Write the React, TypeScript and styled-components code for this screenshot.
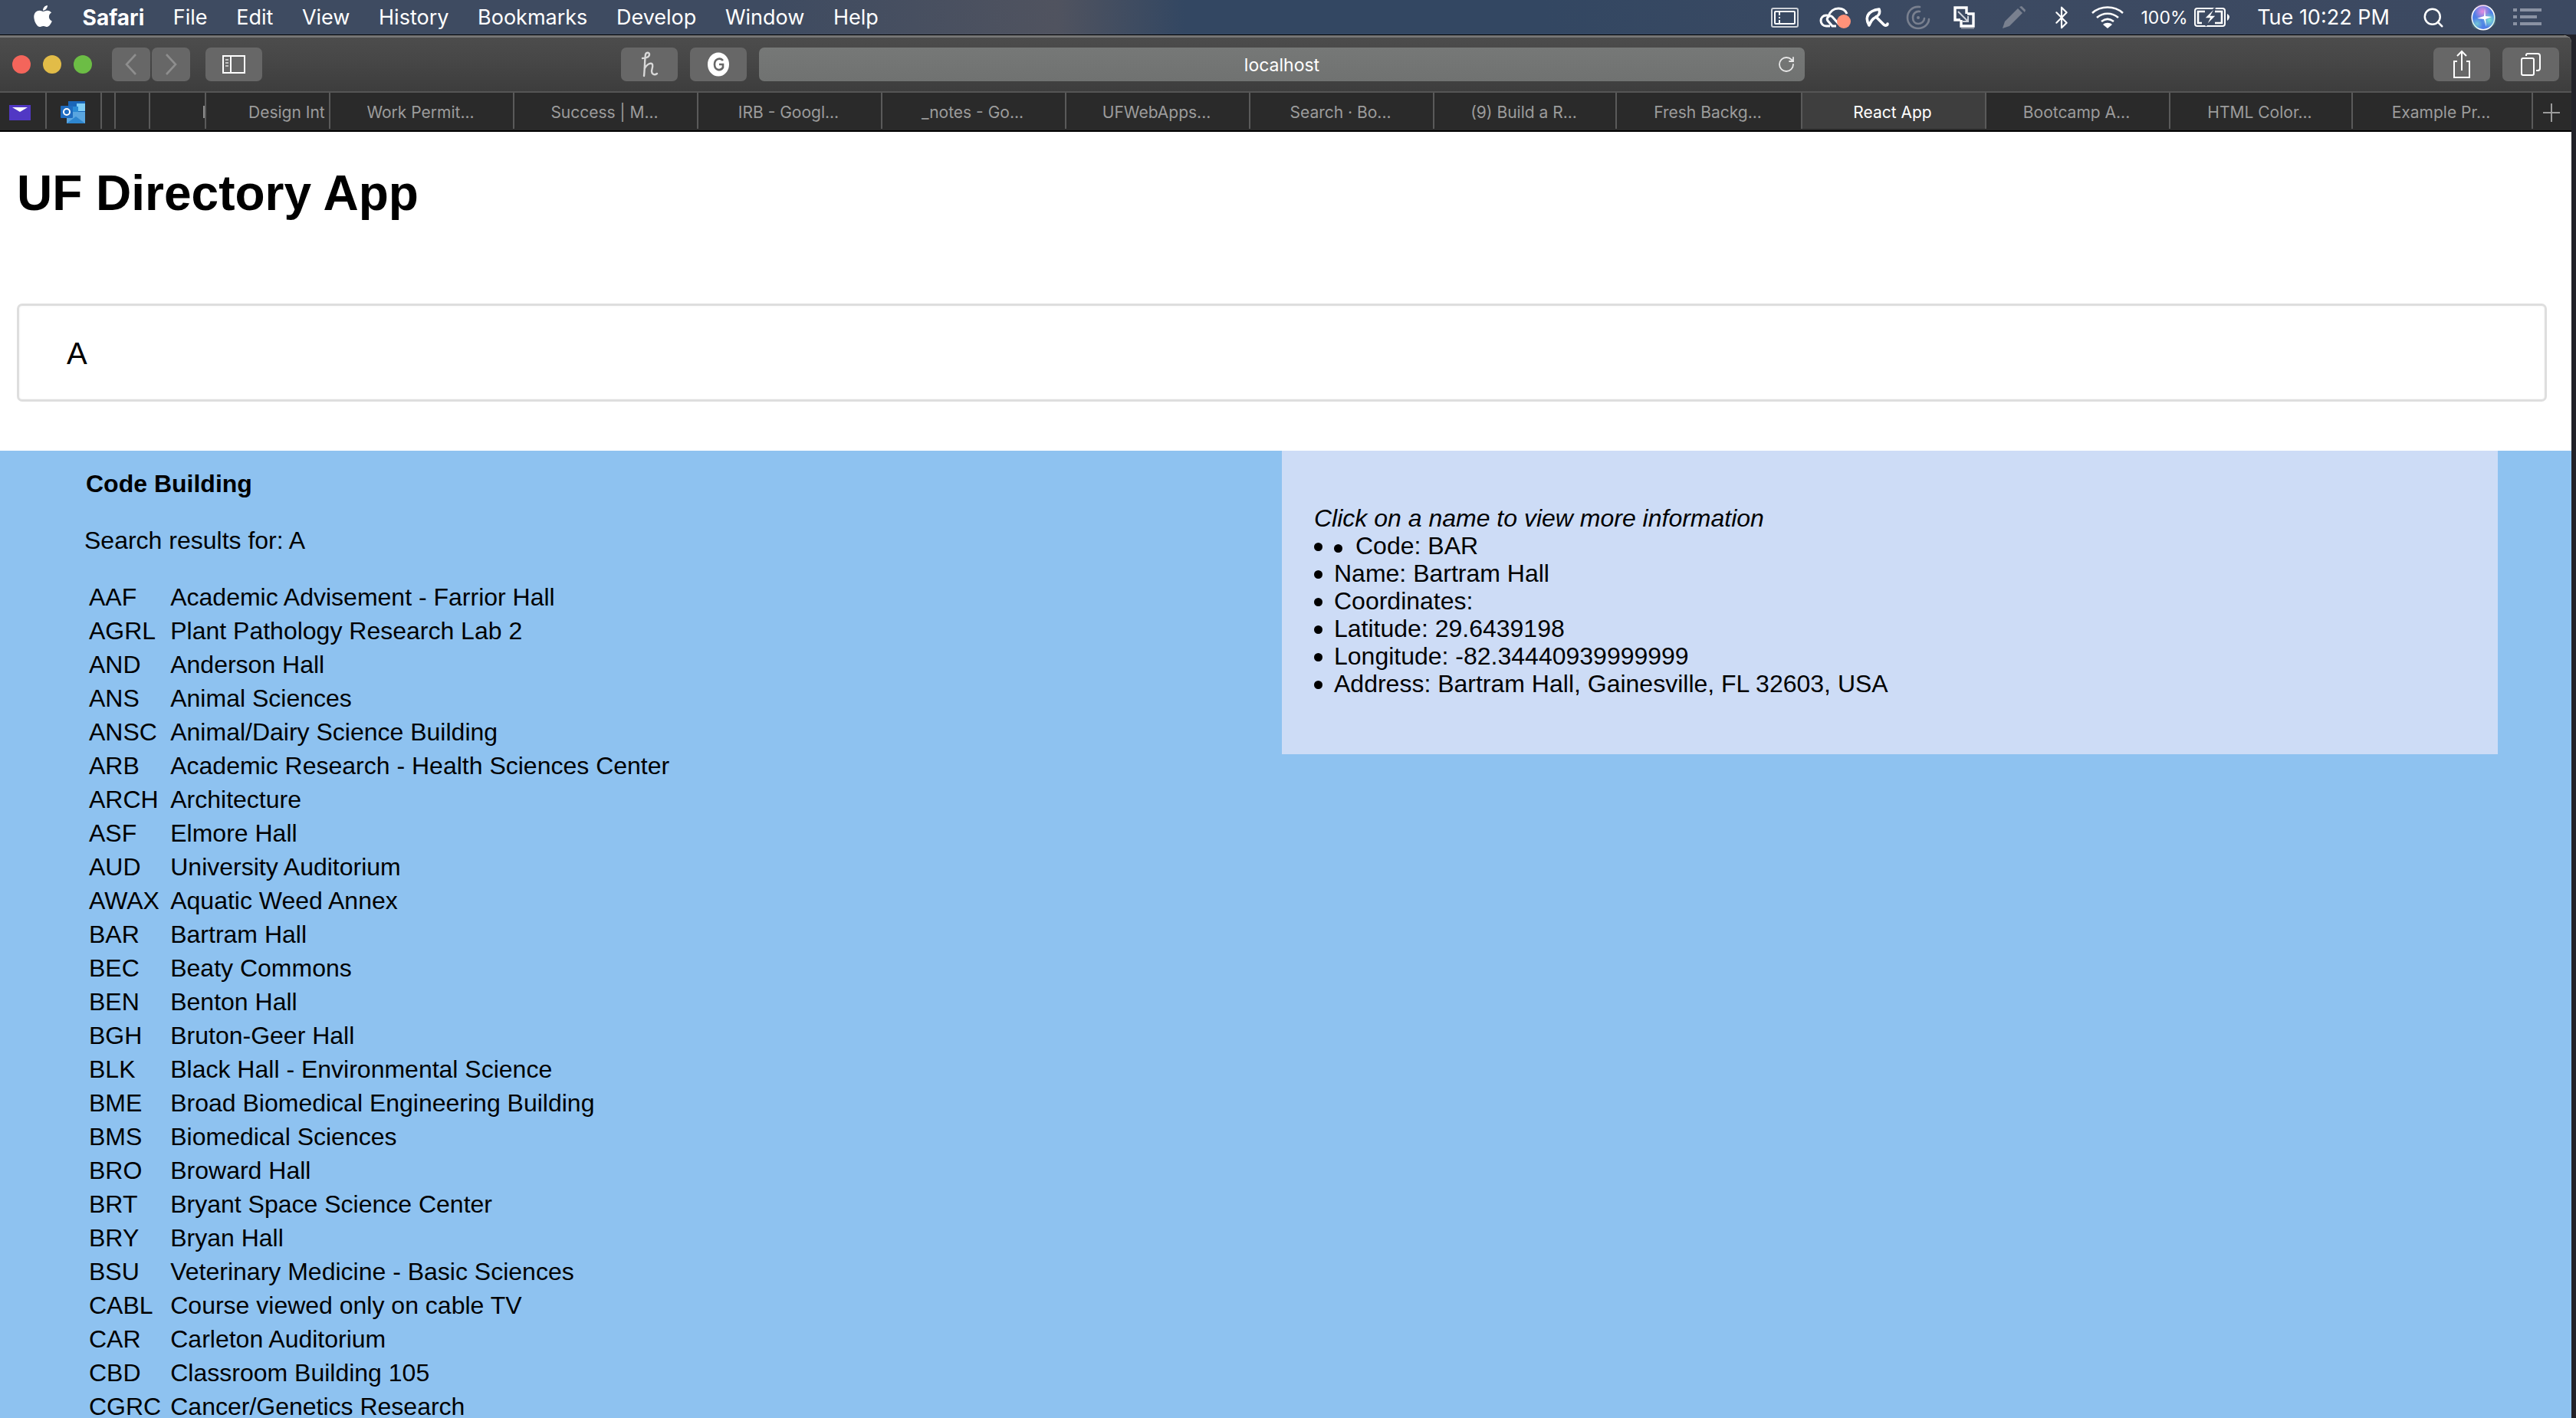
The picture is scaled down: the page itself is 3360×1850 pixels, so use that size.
import React from "react";
import styled, { createGlobalStyle } from "styled-components";
import { FaApple } from "react-icons/fa";
import { Bluetooth, Search, RotateCw } from "lucide-react";

const Global = createGlobalStyle`
  html, body { margin: 0; padding: 0; background: #222229; }
  * { box-sizing: border-box; }
`;

const Screen = styled.div`
  width: 3360px;
  height: 1850px;
  overflow: hidden;
  display: flex;
  flex-direction: column;
  background: #222229;
  font-family: "Liberation Sans", Arial, sans-serif;
`;

const MenuBar = styled.div`
  flex: none;
  height: 45px;
  display: flex;
  align-items: center;
  justify-content: space-between;
  padding: 0 45px 0 42px;
  color: #fff;
  font-family: Inter, "Liberation Sans", sans-serif;
  font-size: 27px;
  background: linear-gradient(90deg, #3e4b61 0%, #3e4b61 30%, #50535f 41%, #334762 46%, #334762 60%, #3c4a62 75%, #3c4961 100%);
`;
const MenuLeft = styled.div`
  display: flex;
  align-items: center;
  gap: 37.6px;
`;
const AppleMark = styled.span`
  display: flex;
  width: 28px;
  svg { display: block; margin-top: -4px; }
`;
const MenuItem = styled.span<{ $bold?: boolean }>`
  font-weight: ${(p) => (p.$bold ? 700 : 400)};
  font-size: ${(p) => (p.$bold ? "28px" : "inherit")};
  white-space: nowrap;
`;
const StatusRow = styled.div`
  display: flex;
  align-items: center;
`;
const StatusSlot = styled.span<{ $left: number; $w: number; $small?: boolean }>`
  display: flex;
  justify-content: center;
  align-items: center;
  flex: none;
  margin-left: ${(p) => p.$left}px;
  width: ${(p) => p.$w}px;
  height: 45px;
  white-space: nowrap;
  font-size: ${(p) => (p.$small ? "23px" : "inherit")};
  svg { display: block; flex: none; }
`;

const Browser = styled.div`
  flex: 1;
  min-height: 0;
  width: 3354px;
  display: flex;
  flex-direction: column;
  border-top: 1px solid #000;
  border-top-right-radius: 10px;
  overflow: hidden;
  background: #fff;
`;
const Toolbar = styled.div`
  flex: none;
  height: 75px;
  display: flex;
  align-items: center;
  padding: 0 16px;
  background: linear-gradient(180deg, #4c4c4c 0%, #474747 40%, #3d3d3d 100%);
  border-top: 3px solid #767676;
  border-bottom: 2px solid #555;
`;
const Light = styled.span<{ $c: string }>`
  width: 24px;
  height: 24px;
  border-radius: 50%;
  flex: none;
  margin-right: 16px;
  background: ${(p) => p.$c};
`;
const ToolButton = styled.div<{ $w: number; $left?: number }>`
  flex: none;
  width: ${(p) => p.$w}px;
  height: 44px;
  margin-left: ${(p) => p.$left ?? 0}px;
  border-radius: 7px;
  background: #676767;
  display: flex;
  align-items: center;
  justify-content: center;
  svg { display: block; }
`;
const UrlBar = styled.div`
  flex: none;
  position: relative;
  width: 1364px;
  height: 44px;
  margin-left: 16px;
  padding-top: 2px;
  border-radius: 7px;
  background: linear-gradient(180deg, #767877 0%, #707271 100%);
  color: #fff;
  font-family: Inter, "Liberation Sans", sans-serif;
  font-size: 23px;
  display: flex;
  align-items: center;
  justify-content: center;
`;
const Reload = styled.span`
  position: absolute;
  right: 12px;
  top: 10px;
  display: flex;
  color: #e8e8e8;
`;
const Spacer = styled.div`
  flex: 1;
`;

const TabStrip = styled.div`
  flex: none;
  height: 51px;
  display: flex;
  background: #2a2a2a;
  border-bottom: 2px solid #000;
  font-family: Inter, "Liberation Sans", sans-serif;
  font-size: 21px;
  color: #9c9c9c;
`;
const Tab = styled.div<{ $w: number; $active?: boolean; $start?: number; $noLine?: boolean }>`
  flex: none;
  position: relative;
  width: ${(p) => p.$w}px;
  height: 47px;
  margin-bottom: 2px;
  display: flex;
  align-items: center;
  justify-content: ${(p) => (p.$start ? "flex-start" : "center")};
  padding: 4px ${(p) => (p.$start ? 0 : 3)}px 0 ${(p) => p.$start ?? 0}px;
  overflow: hidden;
  white-space: nowrap;
  border-right: ${(p) => (p.$noLine ? "0" : "2px solid #5a5a5a")};
  background: ${(p) => (p.$active ? "#3e3e3e" : "transparent")};
  color: ${(p) => (p.$active ? "#fff" : "inherit")};
  svg { display: block; }
`;
const Tick = styled.span`
  position: absolute;
  left: 69px;
  top: 17px;
  width: 3px;
  height: 16px;
  background: #8c8c8c;
`;

const Page = styled.div`
  flex: 1;
  min-height: 0;
  display: flex;
  flex-direction: column;
  background: #fff;
`;
const Header = styled.div`
  flex: none;
  height: 416px;
  padding: 0 32px 0 22px;
  display: flex;
  flex-direction: column;
`;
const Title = styled.h1`
  margin: 43px 0 0;
  font-size: 64px;
  line-height: 75px;
  font-weight: 700;
  color: #000;
`;
const SearchBox = styled.div`
  margin-top: 106px;
  height: 128px;
  border: 3px solid #dedede;
  border-radius: 7px;
  box-shadow: inset 0 0 3px rgba(0, 0, 0, 0.06);
  padding: 2px 0 0 62px;
  display: flex;
  align-items: center;
  font-size: 40px;
  color: #000;
`;
const Content = styled.div`
  flex: 1;
  min-height: 0;
  display: flex;
  align-items: flex-start;
  background: #8ec2f0;
  color: #000;
  font-size: 32px;
  padding-right: 96px;
`;
const ListColumn = styled.div`
  flex: none;
  width: 1672px;
  padding: 23px 0 0 110px;
`;
const ColumnHead = styled.div`
  font-weight: 700;
  line-height: 40px;
  padding-left: 2px;
`;
const ResultNote = styled.div`
  line-height: 40px;
  margin-top: 34px;
  margin-bottom: 32px;
`;
const BuildingTable = styled.table`
  border-collapse: collapse;
`;
const Row = styled.tr`
  height: 44px;
`;
const CodeCell = styled.td`
  padding: 0 12px 0 6px;
  line-height: 40px;
  white-space: nowrap;
`;
const NameCell = styled.td`
  padding: 0;
  line-height: 40px;
  white-space: nowrap;
`;
const InfoPanel = styled.div`
  flex: 1;
  height: 396px;
  background: #cddcf6;
  padding: 70px 42px 0;
  line-height: 36px;
`;
const Hint = styled.div`
  font-style: italic;
`;
const InfoList = styled.ul`
  margin: 0;
  padding: 0;
  list-style: none;
`;
const InfoItem = styled.li`
  position: relative;
  padding-left: 26px;
  &::before {
    content: "";
    position: absolute;
    left: 0;
    top: 14px;
    width: 11px;
    height: 11px;
    border-radius: 50%;
    background: #000;
  }
`;
const NestedDot = styled.span`
  display: inline-block;
  width: 11px;
  height: 11px;
  border-radius: 50%;
  background: #000;
  margin: 0 17px 2px 0;
`;

const buildings: [string, string][] = [
  ["AAF", "Academic Advisement - Farrior Hall"],
  ["AGRL", "Plant Pathology Research Lab 2"],
  ["AND", "Anderson Hall"],
  ["ANS", "Animal Sciences"],
  ["ANSC", "Animal/Dairy Science Building"],
  ["ARB", "Academic Research - Health Sciences Center"],
  ["ARCH", "Architecture"],
  ["ASF", "Elmore Hall"],
  ["AUD", "University Auditorium"],
  ["AWAX", "Aquatic Weed Annex"],
  ["BAR", "Bartram Hall"],
  ["BEC", "Beaty Commons"],
  ["BEN", "Benton Hall"],
  ["BGH", "Bruton-Geer Hall"],
  ["BLK", "Black Hall - Environmental Science"],
  ["BME", "Broad Biomedical Engineering Building"],
  ["BMS", "Biomedical Sciences"],
  ["BRO", "Broward Hall"],
  ["BRT", "Bryant Space Science Center"],
  ["BRY", "Bryan Hall"],
  ["BSU", "Veterinary Medicine - Basic Sciences"],
  ["CABL", "Course viewed only on cable TV"],
  ["CAR", "Carleton Auditorium"],
  ["CBD", "Classroom Building 105"],
  ["CGRC", "Cancer/Genetics Research"],
];

const tabs: { w: number; label: string; active?: boolean }[] = [
  { w: 240, label: "Work Permit..." },
  { w: 240, label: "Success | M..." },
  { w: 240, label: "IRB - Googl..." },
  { w: 240, label: "_notes - Go..." },
  { w: 240, label: "UFWebApps..." },
  { w: 240, label: "Search · Bo..." },
  { w: 238, label: "(9) Build a R..." },
  { w: 242, label: "Fresh Backg..." },
  { w: 240, label: "React App", active: true },
  { w: 240, label: "Bootcamp A..." },
  { w: 238, label: "HTML Color..." },
  { w: 235, label: "Example Pr..." },
];

const Sidecar = () => (
  <svg width="36" height="26" viewBox="0 0 36 26" fill="none" stroke="#fff" strokeWidth="2">
    <rect x="1" y="1" width="34" height="24" rx="2" opacity=".75" />
    <rect x="5" y="5" width="26" height="16" rx="1" />
    <path d="M11 5v5M11 16v5M11 12v2" />
  </svg>
);
const CloudCC = () => (
  <svg width="41" height="29" viewBox="0 0 41 29" fill="none">
    <path d="M14 26H9c-4 0-7-3-7-7s3-7 7-7c1 0 2 0 3 1 2-6 7-10 13-10 5 0 9 2 11 7" stroke="#fff" strokeWidth="3" />
    <path d="M22 26h-5l-6-7c-3-4 3-8 6-5l9 10" stroke="#fff" strokeWidth="3" />
    <circle cx="32" cy="20" r="9" fill="#ff9279" />
  </svg>
);
const Umbrella = () => (
  <svg width="32" height="28" viewBox="0 0 32 28" fill="none" stroke="#fff" strokeWidth="3.6" strokeLinecap="round" strokeLinejoin="round">
    <path d="M6 24C0 14 4 5 19 3c2 6-1 9-7 12-3 2-4 5-6 9z" />
    <path d="M15 13l10 10c2 2 5 1 5-1" />
  </svg>
);
const Spiral = () => (
  <svg width="32" height="32" viewBox="0 0 32 32" fill="none" stroke="#79808f" strokeWidth="2.6" strokeLinecap="round">
    <path d="M18 2C8 1 2 8 2 16c0 8 6 14 14 14 8 0 14-6 14-12" />
    <path d="M18 8c-5-1-9 3-9 8s3 8 7 8 8-3 8-7" />
    <circle cx="16" cy="16" r="2" fill="#79808f" stroke="none" />
  </svg>
);
const CopySync = () => (
  <svg width="28" height="30" viewBox="0 0 28 30" fill="none">
    <path d="M10 27h17" stroke="#79808f" strokeWidth="3" transform="translate(0 2)" />
    <path d="M9 18H2V2h15v8" stroke="#fff" strokeWidth="3.4" />
    <path d="M18 10h8v16H10v-8" stroke="#fff" strokeWidth="3.4" />
    <path d="M6 7l13 13M19 13v7h-7" stroke="#cfd3da" strokeWidth="2" />
  </svg>
);
const Pen = () => (
  <svg width="30" height="29" viewBox="0 0 30 29" fill="#79808f">
    <path d="M0 29l3-9L20 3l6 6L9 26z" />
    <path d="M22 1l3-1 5 5-1 3z" />
  </svg>
);
const Wifi = () => (
  <svg width="42" height="29" viewBox="0 0 42 29" fill="none" stroke="#fff" strokeWidth="2.6">
    <path d="M1 9c11-10 29-10 40 0" />
    <path d="M7 15c8-7 20-7 28 0" />
    <path d="M13 20c5-4 11-4 16 0" />
    <path d="M21 29l-6-5c3-3 9-3 12 0z" fill="#fff" stroke="none" />
  </svg>
);
const Battery = () => (
  <svg width="46" height="25" viewBox="0 0 46 25" fill="none">
    <rect x="1" y="1" width="39" height="23" rx="3" stroke="#fff" strokeWidth="2" />
    <path d="M43 8c2 1 3 3 3 4s-1 4-3 5z" fill="#fff" />
    <path d="M14 5H5v15h5M27 5h9v15h-9" stroke="#fff" strokeWidth="2.6" />
    <path d="M26 1L13 14h7l-5 10 14-14h-7l5-9z" fill="#fff" stroke="#3c4961" strokeWidth="1.5" />
  </svg>
);
const Siri = () => (
  <svg width="32" height="34" viewBox="0 0 32 34">
    <defs>
      <radialGradient id="siriA" cx="50%" cy="50%" r="50%">
        <stop offset="0" stopColor="#e58be0" />
        <stop offset="1" stopColor="#e58be0" stopOpacity="0" />
      </radialGradient>
      <radialGradient id="siriB" cx="50%" cy="50%" r="50%">
        <stop offset="0" stopColor="#7fe4d0" />
        <stop offset="1" stopColor="#7fe4d0" stopOpacity="0" />
      </radialGradient>
    </defs>
    <ellipse cx="16" cy="17" rx="15.5" ry="16.5" fill="#fff" />
    <ellipse cx="16" cy="17" rx="14" ry="15" fill="#4f7fe6" />
    <circle cx="15" cy="9" r="11" fill="url(#siriA)" />
    <circle cx="24" cy="20" r="10" fill="url(#siriB)" />
    <circle cx="8" cy="25" r="8" fill="url(#siriB)" opacity=".7" />
    <path d="M18 5l-1 10-9 3 9 1 3 10-1-10 8-3-8-1z" fill="#fff" />
  </svg>
);
const NotificationList = () => (
  <svg width="37" height="23" viewBox="0 0 37 23" fill="#8a92a3">
    <rect x="0" y="0" width="5" height="4" />
    <rect x="9" y="0" width="28" height="4" />
    <rect x="0" y="9" width="5" height="4" />
    <rect x="9" y="9" width="22" height="4" />
    <rect x="0" y="18" width="5" height="4" />
    <rect x="9" y="18" width="28" height="4" />
  </svg>
);
const SidebarGlyph = () => (
  <svg width="30" height="24" viewBox="0 0 30 24" fill="none" stroke="#fff" strokeWidth="2">
    <rect x="1" y="1" width="28" height="22" />
    <path d="M11 1v22" />
    <path d="M4 6h4M4 10h4M4 14h4" strokeWidth="1.6" opacity=".8" />
  </svg>
);
const Chevron = ({ dir }: { dir: "l" | "r" }) => (
  <svg width="16" height="28" viewBox="0 0 16 28" fill="none" stroke="#8e8e8e" strokeWidth="2.6">
    <path d={dir === "l" ? "M14 1L2 14l12 13" : "M2 1l12 13L2 27"} />
  </svg>
);
const HandH = () => (
  <svg width="26" height="34" viewBox="0 0 26 34" fill="none" stroke="#d8d8d8" strokeWidth="2.4" strokeLinecap="round">
    <path d="M4 9c3 0 9-1 9-5 0-3-4-3-5 0-1 5-1 20-2 28" />
    <path d="M7 22c2-4 6-7 9-6 3 1 0 7 0 10s3 6 7 3" />
  </svg>
);
const GrammarlyG = () => (
  <svg width="28" height="32" viewBox="0 0 28 32">
    <ellipse cx="14" cy="16" rx="14" ry="15.5" fill="#fff" />
    <path d="M20 11c-3-4-11-3-11 5s8 9 11 4v-4h-5" fill="none" stroke="#676767" strokeWidth="2.6" />
  </svg>
);
const Share = () => (
  <svg width="24" height="38" viewBox="0 0 24 38" fill="none" stroke="#fff" strokeWidth="2">
    <path d="M6 15H2v21h20V15h-4" />
    <path d="M12 27V2M6 8l6-6 6 6" />
  </svg>
);
const TabsGlyph = () => (
  <svg width="26" height="30" viewBox="0 0 26 30" fill="none" stroke="#fff" strokeWidth="2">
    <rect x="1" y="7" width="16" height="22" rx="2" />
    <path d="M7 4V3c0-1 1-2 2-2h13c2 0 3 1 3 3v16c0 2-1 3-3 3h-2" />
  </svg>
);
const MailFav = () => (
  <svg width="28" height="20" viewBox="0 0 28 20">
    <rect width="28" height="20" fill="#5138c4" />
    <path d="M4 3h20l-10 6z" fill="#fff" />
  </svg>
);
const OutlookFav = () => (
  <svg width="32" height="29" viewBox="0 0 32 29">
    <rect x="10" y="0" width="22" height="14" fill="#1a66b8" />
    <rect x="21" y="3" width="11" height="10" fill="#7fcdf5" />
    <rect x="15" y="7" width="8" height="8" fill="#2a8ad4" />
    <path d="M8 14l24 0v15H8z" fill="#5aa6e0" />
    <path d="M8 29l12-9 12 9z" fill="#2e86cf" />
    <rect x="0" y="6" width="16" height="16" rx="1" fill="#1f6cc0" />
    <circle cx="8" cy="14" r="4" fill="none" stroke="#fff" strokeWidth="2" />
  </svg>
);
const PlusGlyph = () => (
  <svg width="22" height="26" viewBox="0 0 22 26" stroke="#9c9c9c" strokeWidth="2">
    <path d="M11 1v24M0 13h22" />
  </svg>
);

export default function App() {
  return (
    <Screen>
      <Global />
      <MenuBar>
        <MenuLeft>
          <AppleMark>
            <FaApple size={32} color="#fff" />
          </AppleMark>
          <MenuItem $bold>Safari</MenuItem>
          <MenuItem>File</MenuItem>
          <MenuItem>Edit</MenuItem>
          <MenuItem>View</MenuItem>
          <MenuItem>History</MenuItem>
          <MenuItem>Bookmarks</MenuItem>
          <MenuItem>Develop</MenuItem>
          <MenuItem>Window</MenuItem>
          <MenuItem>Help</MenuItem>
        </MenuLeft>
        <StatusRow>
          <StatusSlot $left={0} $w={36}><Sidecar /></StatusSlot>
          <StatusSlot $left={27} $w={41}><CloudCC /></StatusSlot>
          <StatusSlot $left={18} $w={32}><Umbrella /></StatusSlot>
          <StatusSlot $left={22} $w={32}><Spiral /></StatusSlot>
          <StatusSlot $left={30} $w={28}><CopySync /></StatusSlot>
          <StatusSlot $left={36} $w={30}><Pen /></StatusSlot>
          <StatusSlot $left={37} $w={19}><Bluetooth size={32} color="#fff" strokeWidth={1.6} /></StatusSlot>
          <StatusSlot $left={30} $w={42}><Wifi /></StatusSlot>
          <StatusSlot $left={23} $w={60} $small>100%</StatusSlot>
          <StatusSlot $left={9} $w={46}><Battery /></StatusSlot>
          <StatusSlot $left={36} $w={173}>Tue 10:22 PM</StatusSlot>
          <StatusSlot $left={43} $w={27}><Search size={30} color="#fff" strokeWidth={2} /></StatusSlot>
          <StatusSlot $left={36} $w={32}><Siri /></StatusSlot>
          <StatusSlot $left={23} $w={37}><NotificationList /></StatusSlot>
        </StatusRow>
      </MenuBar>
      <Browser>
        <Toolbar>
          <Light $c="#f4655b" />
          <Light $c="#e2bc48" />
          <Light $c="#6cbd45" />
          <ToolButton $w={50} $left={10}><Chevron dir="l" /></ToolButton>
          <ToolButton $w={50} $left={2}><Chevron dir="r" /></ToolButton>
          <ToolButton $w={74} $left={20}><SidebarGlyph /></ToolButton>
          <ToolButton $w={74} $left={468}><HandH /></ToolButton>
          <ToolButton $w={74} $left={16}><GrammarlyG /></ToolButton>
          <UrlBar>
            localhost
            <Reload><RotateCw size={24} strokeWidth={1.8} /></Reload>
          </UrlBar>
          <Spacer />
          <ToolButton $w={74}><Share /></ToolButton>
          <ToolButton $w={74} $left={16}><TabsGlyph /></ToolButton>
        </Toolbar>
        <TabStrip>
          <Tab $w={61} $start={12}><MailFav /></Tab>
          <Tab $w={72}><OutlookFav /></Tab>
          <Tab $w={18} />
          <Tab $w={45} />
          <Tab $w={73}><Tick /></Tab>
          <Tab $w={162} $start={55}>Design Int</Tab>
          {tabs.map((t) => (
            <Tab key={t.label} $w={t.w} $active={t.active}>{t.label}</Tab>
          ))}
          <Tab $w={50} $noLine><PlusGlyph /></Tab>
        </TabStrip>
        <Page>
          <Header>
            <Title>UF Directory App</Title>
            <SearchBox>A</SearchBox>
          </Header>
          <Content>
            <ListColumn>
              <ColumnHead>Code Building</ColumnHead>
              <ResultNote>Search results for: A</ResultNote>
              <BuildingTable>
                <tbody>
                  {buildings.map(([code, name]) => (
                    <Row key={code}>
                      <CodeCell>{code}</CodeCell>
                      <NameCell>{name}</NameCell>
                    </Row>
                  ))}
                </tbody>
              </BuildingTable>
            </ListColumn>
            <InfoPanel>
              <Hint>Click on a name to view more information</Hint>
              <InfoList>
                <InfoItem><NestedDot />Code: BAR</InfoItem>
                <InfoItem>Name: Bartram Hall</InfoItem>
                <InfoItem>Coordinates:</InfoItem>
                <InfoItem>Latitude: 29.6439198</InfoItem>
                <InfoItem>Longitude: -82.34440939999999</InfoItem>
                <InfoItem>Address: Bartram Hall, Gainesville, FL 32603, USA</InfoItem>
              </InfoList>
            </InfoPanel>
          </Content>
        </Page>
      </Browser>
    </Screen>
  );
}
